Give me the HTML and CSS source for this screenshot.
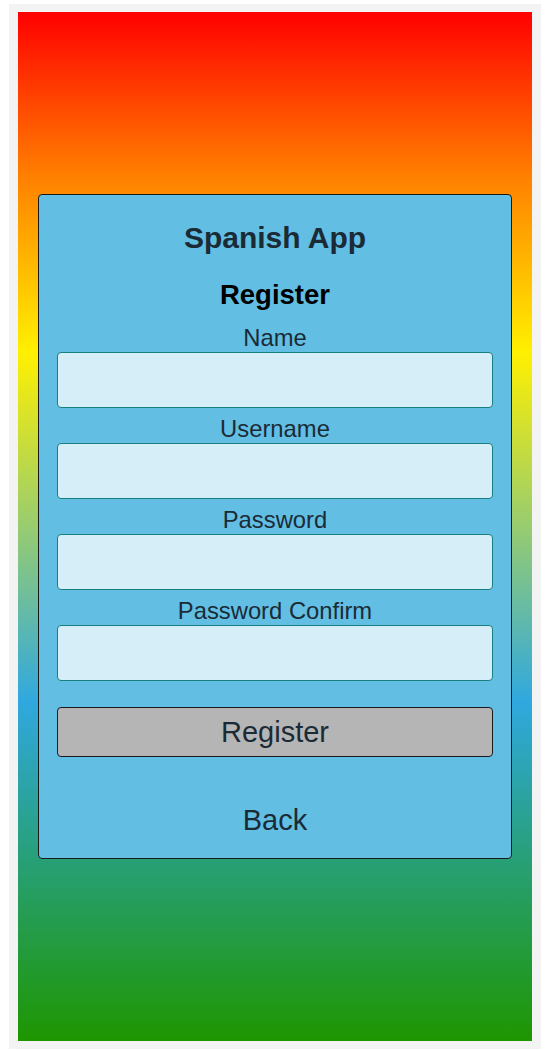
FILE: index.html
```html
<!DOCTYPE html>
<html lang="en">
<head>
<meta charset="utf-8">
<title>Spanish App - Register</title>
<link rel="stylesheet" href="styles.css">
</head>
<body>
<div class="frame">
  <div class="backdrop">
    <form class="card" onsubmit="return false">
      <h1 class="title">Spanish App</h1>
      <h2 class="subtitle">Register</h2>
      <div class="field">
        <label class="label" for="name">Name</label>
        <input class="input" id="name" type="text">
      </div>
      <div class="field">
        <label class="label" for="username">Username</label>
        <input class="input" id="username" type="text">
      </div>
      <div class="field">
        <label class="label" for="password">Password</label>
        <input class="input" id="password" type="password">
      </div>
      <div class="field">
        <label class="label" for="confirm">Password Confirm</label>
        <input class="input" id="confirm" type="password">
      </div>
      <button class="btn" type="submit">Register</button>
      <a class="back" href="#">Back</a>
    </form>
  </div>
</div>
</body>
</html>
```

FILE: styles.css
```css
html, body {
  margin: 0;
  background: #ffffff;
}
body {
  padding: 4px 9px 0 9px;
  font-family: "Liberation Sans", Arial, sans-serif;
  color: #1b2b36;
}
.frame {
  background: #f3f3f3;
  padding: 8px 9px;
}
.backdrop {
  height: 1029px;
  background: linear-gradient(to bottom, #ff0000 0%, #ff8000 16%, #fff000 33%, #30a8df 67%, #1e9600 100%);
  display: flex;
  align-items: center;
  justify-content: center;
}
.card {
  width: 436px;
  background: #62bee3;
  border: 1px solid #1a1a1a;
  border-radius: 4px;
  padding: 25px 18px 21px;
  display: flex;
  flex-direction: column;
  align-items: stretch;
  text-align: center;
}
.title {
  margin: 0;
  font-size: 30px;
  line-height: 36px;
  font-weight: bold;
  color: #1b2b36;
}
.subtitle {
  margin: 24px 0 14px;
  font-size: 27.5px;
  line-height: 30px;
  font-weight: bold;
  color: #000000;
}
.field {
  display: flex;
  flex-direction: column;
}
.field + .field {
  margin-top: 7px;
}
.label {
  font-size: 23.8px;
  line-height: 28px;
  color: #1b2b36;
}
.input {
  box-sizing: border-box;
  height: 56px;
  margin: 0;
  width: 100%;
  background: #d6eef8;
  border: 1px solid #17807e;
  border-radius: 4px;
  font-size: 20px;
  padding: 0 10px;
  outline: none;
}
.btn {
  box-sizing: border-box;
  margin-top: 26px;
  height: 50px;
  width: 100%;
  background: #b5b5b5;
  border: 1px solid #1a1a1a;
  border-radius: 4px;
  font-family: "Liberation Sans", Arial, sans-serif;
  font-size: 29px;
  color: #1b2b36;
  cursor: pointer;
}
.back {
  margin-top: 46px;
  font-size: 29px;
  line-height: 34px;
  color: #1b2b36;
  text-decoration: none;
}
```
